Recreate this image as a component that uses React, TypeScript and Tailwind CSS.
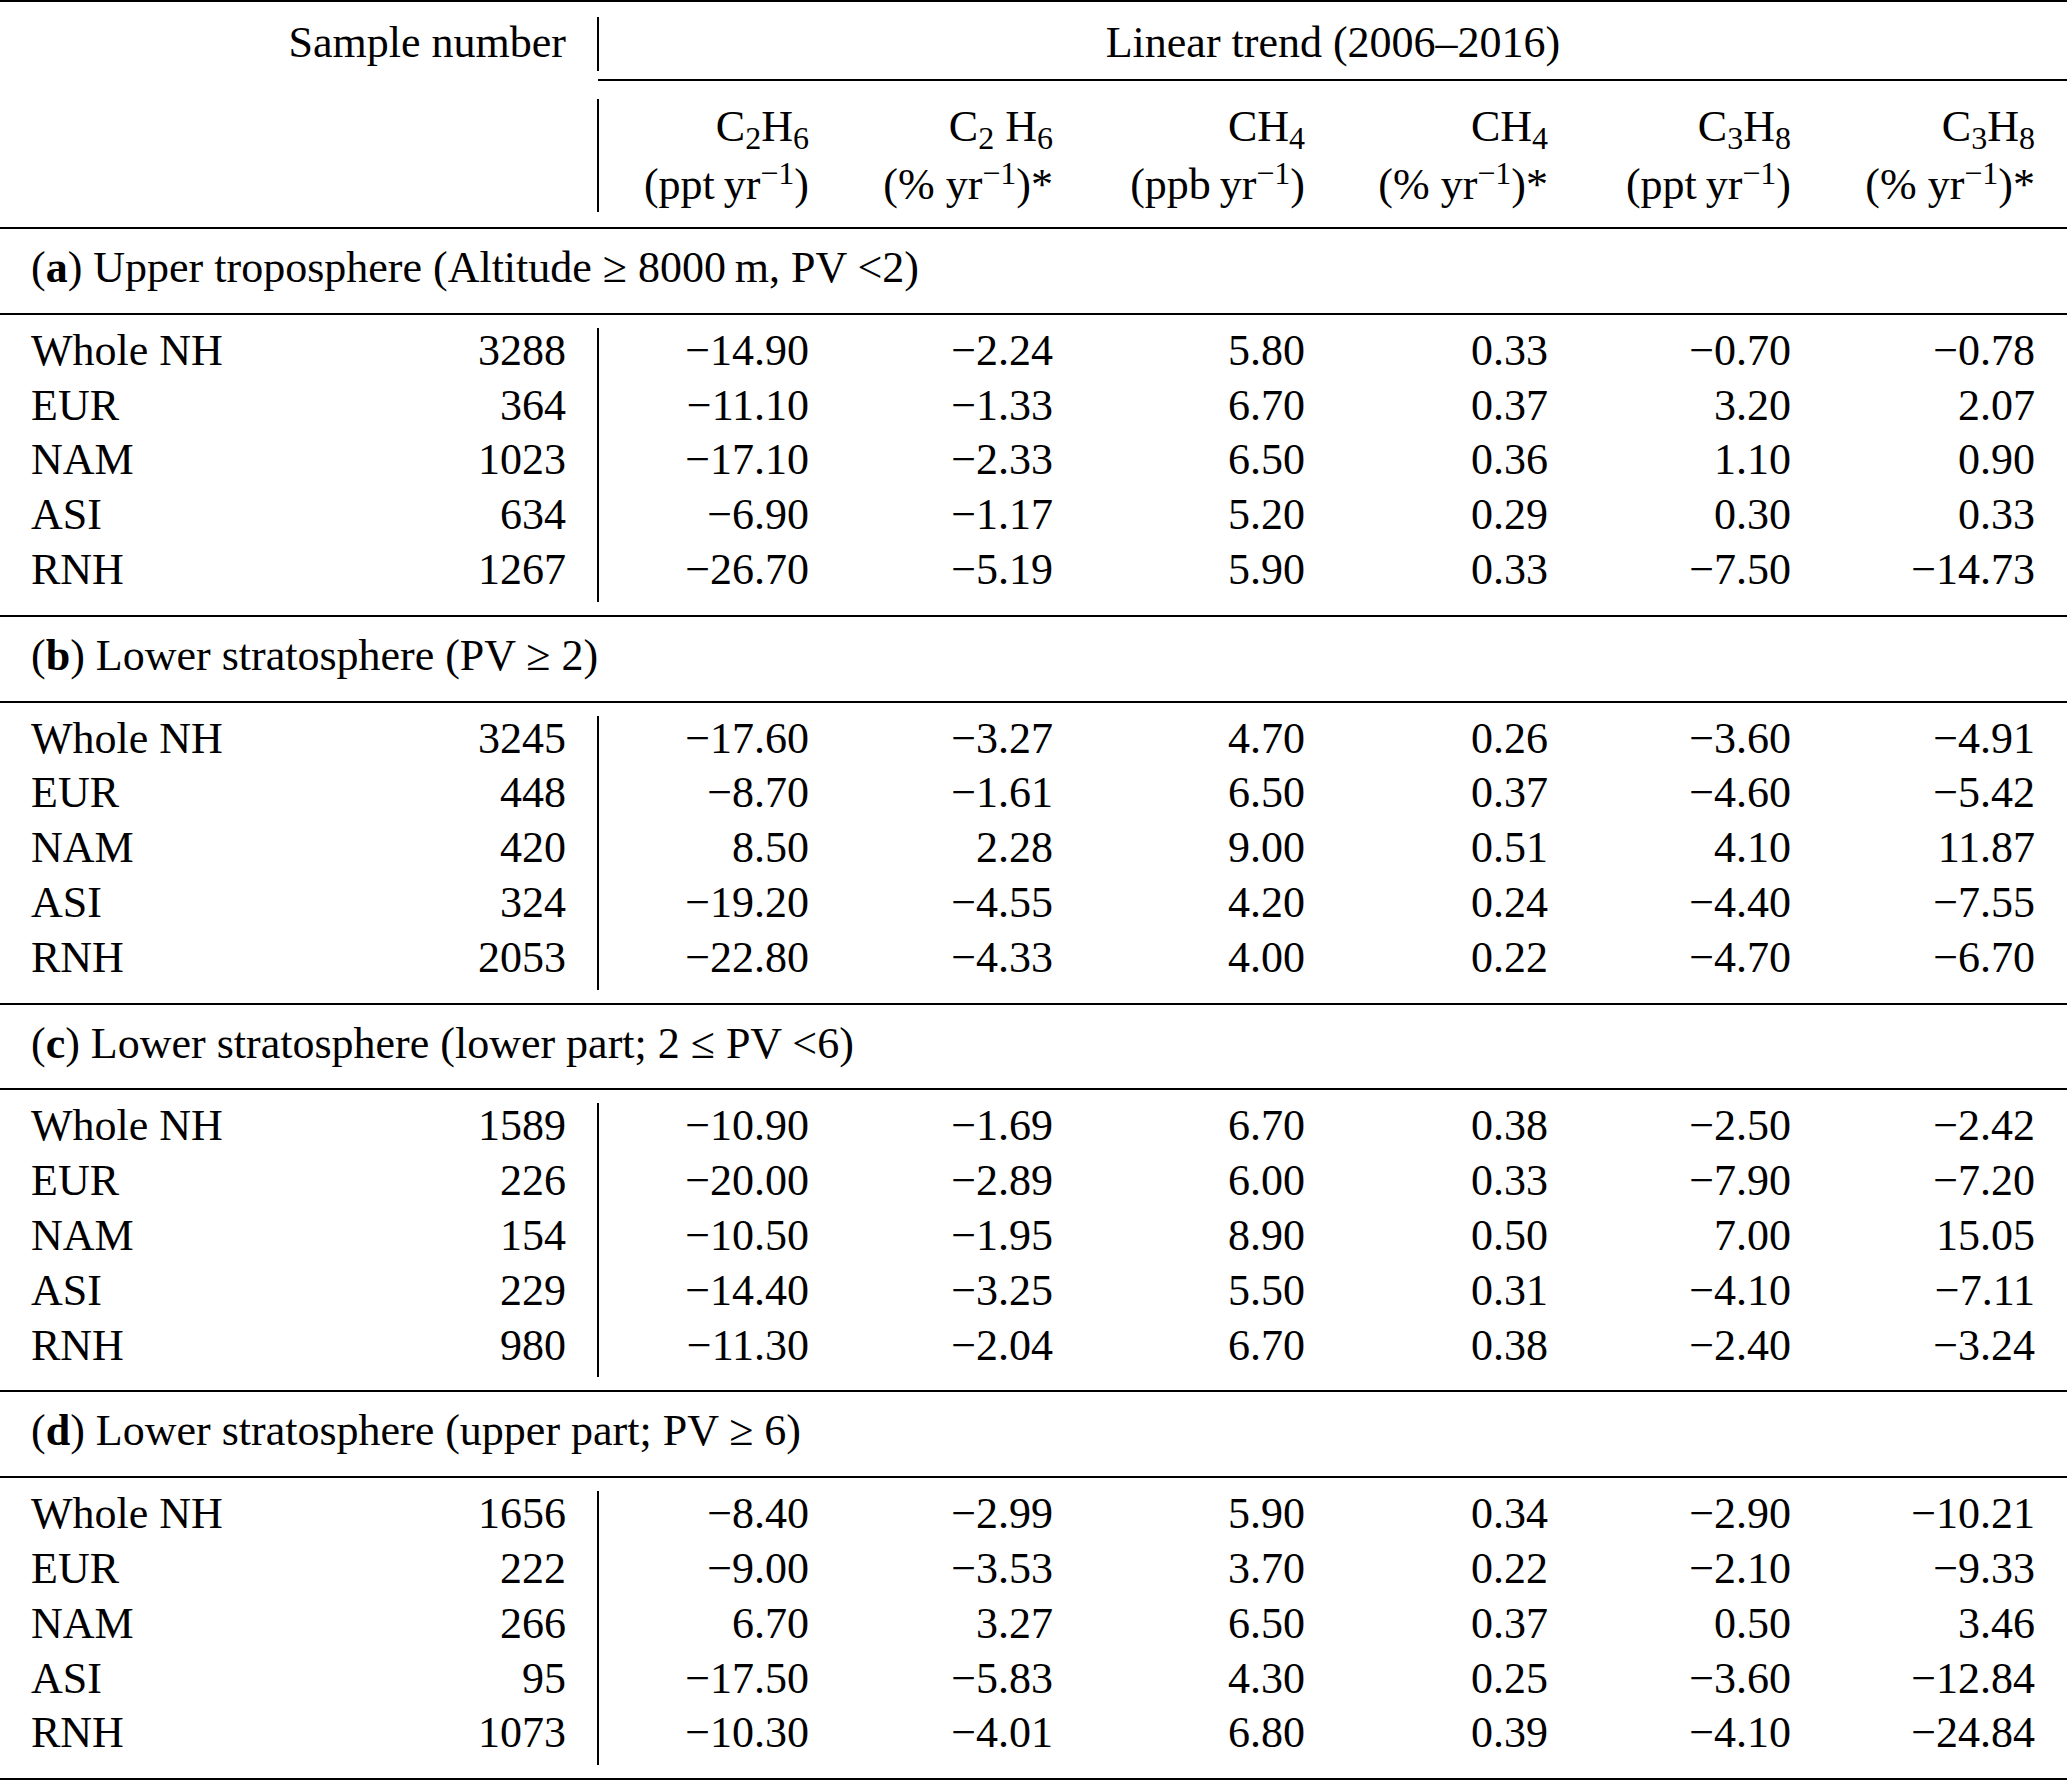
import React from 'react';

// column widths for the six trend columns (right edges line up with the reference)
const colW = ['w-[210px]', 'w-[244px]', 'w-[252px]', 'w-[243px]', 'w-[243px]', 'w-[244px]'];

type Row = [string, string, ...string[]];

const sections: { tag: string; title: React.ReactNode; rows: Row[] }[] = [
  {
    tag: 'a',
    title: <>Upper troposphere (Altitude ≥ 8000{'\u2009'}m, PV &lt;2)</>,
    rows: [
      ['Whole NH', '3288', '-14.90', '-2.24', '5.80', '0.33', '-0.70', '-0.78'],
      ['EUR', '364', '-11.10', '-1.33', '6.70', '0.37', '3.20', '2.07'],
      ['NAM', '1023', '-17.10', '-2.33', '6.50', '0.36', '1.10', '0.90'],
      ['ASI', '634', '-6.90', '-1.17', '5.20', '0.29', '0.30', '0.33'],
      ['RNH', '1267', '-26.70', '-5.19', '5.90', '0.33', '-7.50', '-14.73'],
    ],
  },
  {
    tag: 'b',
    title: <>Lower stratosphere (PV ≥ 2)</>,
    rows: [
      ['Whole NH', '3245', '-17.60', '-3.27', '4.70', '0.26', '-3.60', '-4.91'],
      ['EUR', '448', '-8.70', '-1.61', '6.50', '0.37', '-4.60', '-5.42'],
      ['NAM', '420', '8.50', '2.28', '9.00', '0.51', '4.10', '11.87'],
      ['ASI', '324', '-19.20', '-4.55', '4.20', '0.24', '-4.40', '-7.55'],
      ['RNH', '2053', '-22.80', '-4.33', '4.00', '0.22', '-4.70', '-6.70'],
    ],
  },
  {
    tag: 'c',
    title: <>Lower stratosphere (lower part; 2 ≤ PV &lt;6)</>,
    rows: [
      ['Whole NH', '1589', '-10.90', '-1.69', '6.70', '0.38', '-2.50', '-2.42'],
      ['EUR', '226', '-20.00', '-2.89', '6.00', '0.33', '-7.90', '-7.20'],
      ['NAM', '154', '-10.50', '-1.95', '8.90', '0.50', '7.00', '15.05'],
      ['ASI', '229', '-14.40', '-3.25', '5.50', '0.31', '-4.10', '-7.11'],
      ['RNH', '980', '-11.30', '-2.04', '6.70', '0.38', '-2.40', '-3.24'],
    ],
  },
  {
    tag: 'd',
    title: <>Lower stratosphere (upper part; PV ≥ 6)</>,
    rows: [
      ['Whole NH', '1656', '-8.40', '-2.99', '5.90', '0.34', '-2.90', '-10.21'],
      ['EUR', '222', '-9.00', '-3.53', '3.70', '0.22', '-2.10', '-9.33'],
      ['NAM', '266', '6.70', '3.27', '6.50', '0.37', '0.50', '3.46'],
      ['ASI', '95', '-17.50', '-5.83', '4.30', '0.25', '-3.60', '-12.84'],
      ['RNH', '1073', '-10.30', '-4.01', '6.80', '0.39', '-4.10', '-24.84'],
    ],
  },
];

const minus = (s: string) => s.replace('-', '\u2212');

function Rule() {
  return <div className="h-[2px] w-full bg-black" />;
}

function Sub({ children }: { children: React.ReactNode }) {
  return <sub className="text-[32px] bottom-[-8px]">{children}</sub>;
}

function Sup({ children }: { children: React.ReactNode }) {
  return <sup className="text-[32px] top-[-15px]">{children}</sup>;
}

const headers: { formula: React.ReactNode; unit: React.ReactNode }[] = [
  { formula: <>C<Sub>2</Sub>H<Sub>6</Sub></>, unit: <>(ppt{'\u2009'}yr<Sup>−1</Sup>)</> },
  { formula: <>C<Sub>2</Sub> H<Sub>6</Sub></>, unit: <>(% yr<Sup>−1</Sup>)*</> },
  { formula: <>CH<Sub>4</Sub></>, unit: <>(ppb{'\u2009'}yr<Sup>−1</Sup>)</> },
  { formula: <>CH<Sub>4</Sub></>, unit: <>(% yr<Sup>−1</Sup>)*</> },
  { formula: <>C<Sub>3</Sub>H<Sub>8</Sub></>, unit: <>(ppt{'\u2009'}yr<Sup>−1</Sup>)</> },
  { formula: <>C<Sub>3</Sub>H<Sub>8</Sub></>, unit: <>(% yr<Sup>−1</Sup>)*</> },
];

function Header() {
  return (
    <div>
      {/* top row: sample number | linear trend */}
      <div className="flex">
        <div className="w-[597px] pt-[14px] pb-[8px] pr-[31px] text-right h-[77px] leading-[54.8px]">
          Sample number
        </div>
        <div className="w-[2px] bg-black mt-[15px] mb-[8px]" />
        <div className="flex-1 pt-[14px] text-center leading-[54.8px]">Linear trend (2006–2016)</div>
      </div>
      <div className="flex">
        <div className="w-[598px]" />
        <div className="flex-1 h-[2px] bg-black" />
      </div>
      {/* species + units */}
      <div className="flex">
        <div className="w-[597px]" />
        <div className="w-[2px] bg-black mt-[18px] mb-[15px]" />
        <div className="flex pt-[19px] pb-[14.2px]">
          {headers.map((h, i) => (
            <div key={i} className={`${colW[i]} text-right`}>
              <div className="h-[58px] leading-[54.8px] whitespace-nowrap">{h.formula}</div>
              <div className="h-[54.8px] leading-[54.8px] whitespace-nowrap">{h.unit}</div>
            </div>
          ))}
        </div>
      </div>
    </div>
  );
}

function Section({ tag, title, rows }: { tag: string; title: React.ReactNode; rows: Row[] }) {
  return (
    <div>
      <Rule />
      <div className="pl-[31px] pt-[12px] pb-[17px] h-[83.8px] leading-[54.8px] whitespace-nowrap">
        (<span className="font-bold">{tag}</span>) {title}
      </div>
      <Rule />
      <div className="flex">
        <div className="w-[597px] pt-[9px] pb-[17px]">
          {rows.map((r) => (
            <div key={r[0]} className="flex justify-between h-[54.8px] leading-[54.8px] pl-[31px] pr-[31px]">
              <span>{r[0]}</span>
              <span>{r[1]}</span>
            </div>
          ))}
        </div>
        <div className="w-[2px] bg-black mt-[13px] mb-[13px]" />
        <div className="pt-[9px] pb-[17px]">
          {rows.map((r) => (
            <div key={r[0]} className="flex h-[54.8px] leading-[54.8px]">
              {r.slice(2).map((v, i) => (
                <div key={i} className={`${colW[i]} text-right`}>
                  {minus(v)}
                </div>
              ))}
            </div>
          ))}
        </div>
      </div>
    </div>
  );
}

export default function App() {
  return (
    <div className="w-[2067px] min-h-[1781px] bg-white text-black font-['Liberation_Serif','Times_New_Roman',serif] text-[44px]">
      <Rule />
      <Header />
      {sections.map((s) => (
        <Section key={s.tag} tag={s.tag} title={s.title} rows={s.rows} />
      ))}
      <Rule />
    </div>
  );
}
